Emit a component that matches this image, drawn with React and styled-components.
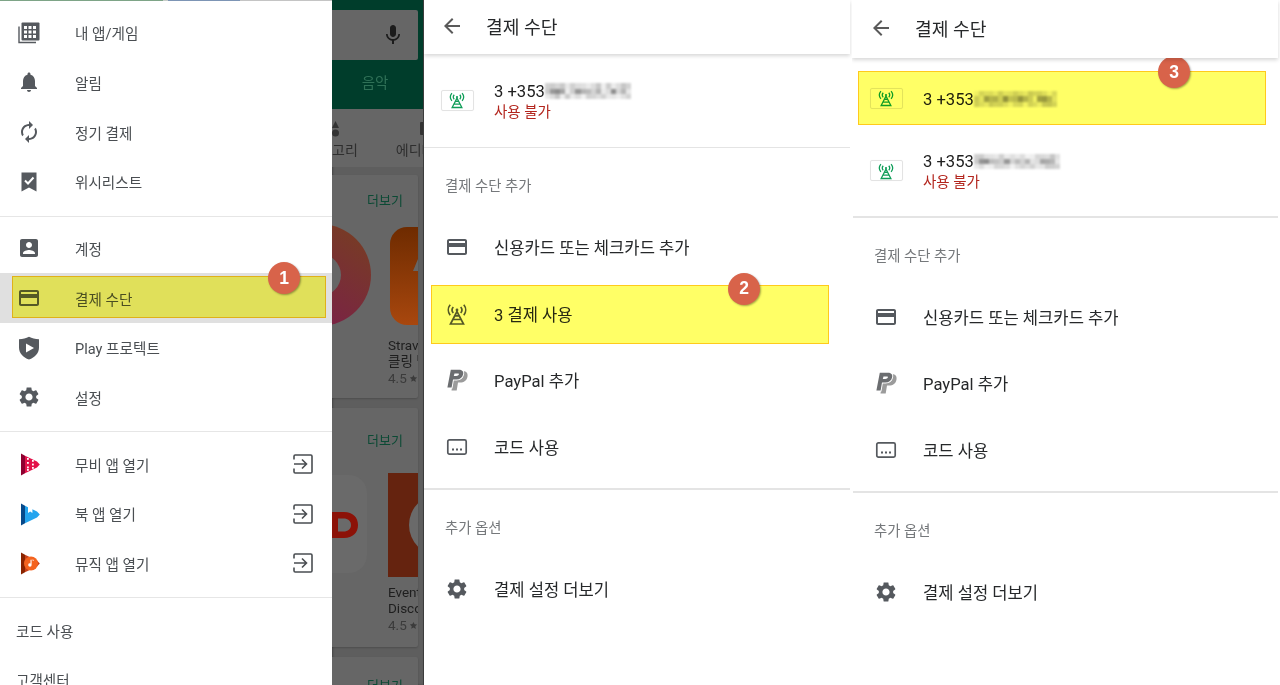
import React from "react";
import styled, { createGlobalStyle } from "styled-components";

const Global = createGlobalStyle`
  html, body { margin: 0; padding: 0; background: #fff; }
  #root { width: 1280px; height: 685px; overflow: hidden; }
  * { box-sizing: border-box; }
`;
const FONT = `Roboto, "Noto Sans CJK KR", "Noto Sans", sans-serif`;

const Page = styled.div`
  display: flex; width: 1280px; height: 685px; overflow: hidden;
  font-family: ${FONT}; background: #fff;
`;
/* ---------- first phone ---------- */
const PhoneOne = styled.section`
  display: flex; width: 424px; height: 685px; flex: none; overflow: hidden;
`;
const Drawer = styled.nav`
  width: 332px; flex: none; background: #fff; position: relative; z-index: 1;
`;
const TopStripe = styled.div`
  height: 1px; margin-bottom: -1px;
  background: linear-gradient(90deg, #7ea487 0 163px, #c8cdc8 163px 168px, #7d95b5 168px 240px, #c4c4c4 240px);
`;
const DrawerGroup = styled.div`
  padding: ${p => p.$pt ?? 8}px 0 ${p => p.$pb ?? 8}px;
  border-bottom: ${p => (p.$last ? "0" : "1.5px solid #e6e6e6")};
`;
const DrawerRow = styled.div`
  position: relative; display: flex; align-items: center; height: 49.67px;
  padding: 0 19px 0 17px; font-size: 14.6px; color: #4a4e52;
  background: ${p => (p.$active ? "#e0e0e0" : "transparent")};
`;
const DrawerIcon = styled.span`
  display: flex; width: 24px; height: 24px; flex: none; margin-right: 34px;
`;
const DrawerLabel = styled.span` flex: 1; white-space: nowrap; `;
const DrawerPlain = styled.div`
  display: flex; align-items: center; height: 49.67px; padding-left: 16px;
  font-size: 14.6px; color: #4a4e52;
`;
/* ---------- dimmed store behind drawer ---------- */
const Dimmed = styled.div`
  width: 92px; flex: none; display: flex; flex-direction: column;
  background: #5e5e5e; border-right: 1px solid #3c3c3c; overflow: hidden;
  box-shadow: inset 1px 0 2px rgba(0,0,0,.25);
`;
const StoreBar = styled.div`
  height: 109px; flex: none; background: #003d2b; padding-top: 10px;
  display: flex; flex-direction: column; align-items: stretch;
`;
const SearchBox = styled.div`
  height: 50px; margin-right: 5px; background: #666; border-radius: 0 2px 2px 0;
  display: flex; align-items: center; justify-content: flex-end; padding-right: 13px;
`;
const StoreTab = styled.div`
  flex: 1; display: flex; align-items: center; justify-content: center; padding: 0 5px 6px 0;
  color: #2f7157; font-size: 14.5px;
`;
const TabRow = styled.div`
  height: 58px; flex: none; background: #666; display: flex; gap: 38px; white-space: nowrap;
  font-size: 14px; color: #2e2e2e; overflow: hidden;
`;
const Tab = styled.div`
  display: flex; flex-direction: column; align-items: flex-start; gap: 2px; padding-top: 11px; flex: none;
`;
const TabGlyph = styled.span` display: flex; height: 17px; padding-left: ${p => p.$pl || 0}px; `;
const Card = styled.div`
  margin: ${p => p.$mt}px 5px 0 0; background: #666; height: ${p => p.$h}px; flex: none;
  border-radius: 0 2px 2px 0; box-shadow: 0 1px 2px rgba(0,0,0,.18); overflow: hidden;
  display: flex; flex-direction: column;
`;
const More = styled.div`
  text-align: right; padding: ${p => p.$pt}px 15px 0 0; font-size: 13px; color: #0c4a35; height: ${p => p.$h}px; flex: none;
`;
const CardBody = styled.div`
  display: grid; grid-template-columns: 56px 30px; 
`;
const AppName = styled.div`
  font-size: 13.5px; line-height: 16px; color: #1e1e1e; white-space: nowrap; overflow: hidden; margin-top: ${p => p.$mt}px;
`;
const AppRating = styled.div`
  display: flex; align-items: center; gap: 2px;
  font-size: 13.5px; line-height: 18px; color: #3b3b3b; white-space: nowrap;
`;
const Art = styled.svg` display: block; flex: none; `;

/* ---------- pay panels ---------- */
const Panel = styled.section`
  width: 428px; flex: none; height: 685px; padding-left: ${p => p.$shift}px; overflow: hidden; background: #fff;
`;
const Header = styled.header`
  position: relative; z-index: 1; height: ${p => p.$h}px; display: flex; align-items: center; background: #fff;
  margin-left: ${p => -p.$shift}px; padding: 0 0 2px ${p => 16 + p.$shift}px; margin-right: 2px;
  box-shadow: 0 2px 4px rgba(0,0,0,.16);
`;
const HeaderIcon = styled.span` display: flex; width: 24px; margin-right: 22px; flex: none; `;
const Title = styled.h1` margin: 0; font-size: 18.2px; font-weight: 400; color: #26282a; `;
const Row = styled.div`
  position: relative; display: flex; align-items: center; height: ${p => p.$h || 66.5}px;
  margin-top: ${p => p.$mt || 0}px; padding-left: 16px;
`;
const Slot = styled.span`
  width: 34px; height: 24px; flex: none; margin-right: 20px; display: flex; align-items: center; justify-content: center;
`;
const RowText = styled.span` font-size: 16.6px; color: #26282a; white-space: nowrap; `;
const Stack = styled.div` display: flex; flex-direction: column; padding-top: ${p => p.$pt || 0}px; `;
const NumberLine = styled.div` display: flex; align-items: center; font-size: 16.6px; line-height: 21px; color: #202020; `;
const Unavailable = styled.div` font-size: 14.5px; line-height: 22px; color: #b3261e; `;
const CardBadge = styled.span`
  display: flex; align-items: center; justify-content: center; width: 33px; height: 21px;
  border: 1px solid #e3e3e3; border-radius: 2px; background: transparent; box-shadow: 0 0 1px rgba(0,0,0,.05);
`;
const Divider = styled.hr`
  margin: 0 2px 0 0; border: 0; height: 1.5px; background: #e4e4e4;
`;
const SectionTitle = styled.div`
  height: 66px; padding: 7px 0 0 21px; display: flex; align-items: center;
  font-size: 14.4px; color: #75787b;
`;
const Section = styled.div` padding-bottom: ${p => p.$pb || 0}px; `;

/* ---------- annotations ---------- */
const Marker = styled.span`
  position: absolute; pointer-events: none;
  top: ${p => p.$t}px; bottom: ${p => p.$b}px; left: ${p => p.$l}px; right: ${p => p.$r}px;
  background: #ffff66; border: 1.5px solid #ffca1c; mix-blend-mode: multiply;
`;
const Badge = styled.span`
  position: absolute; left: ${p => p.$x}px; top: ${p => p.$y}px; width: 32px; height: 32px; border-radius: 50%;
  background: #d8634a; color: #fff; display: flex; align-items: center; justify-content: center;
  font: 700 17.5px "Liberation Sans", Arial, sans-serif; box-shadow: 1px 1px 2px rgba(0,0,0,.35);
`;
const Redact = styled.div`
  display: grid; grid-template-columns: repeat(17, ${p => p.$w}px); grid-auto-rows: 5.3px;
  filter: blur(.8px);
`;
const Cell = styled.span``;

function Pixelated({ seed, w = 5.1 }) {
  const cells = [];
  for (let r = 0; r < 3; r++) {
    for (let c = 0; c < 17; c++) {
      const ch = seed.charCodeAt((c * 3 + r * 7) % seed.length);
      const v = Math.round(242 - (r === 1 ? 1.15 : 0.5) * ((ch * 37 + c * 11) % 90));
      cells.push(<Cell key={`${r}-${c}`} style={{ background: `rgb(${v},${v},${v})` }} />);
    }
  }
  return <Redact $w={w}>{cells}</Redact>;
}

/* ---------- icons ---------- */
const G = "#55595e";
const I = ({ d, size = 24, fill = G }) => (
  <svg width={size} height={size} viewBox="0 0 24 24" fill={fill}><path d={d} /></svg>
);
const bell = "M12 22c1.1 0 2-.9 2-2h-4c0 1.1.9 2 2 2zm6-6v-5c0-3.07-1.63-5.64-4.5-6.32V4c0-.83-.67-1.5-1.5-1.5s-1.5.67-1.5 1.5v.68C7.64 5.36 6 7.92 6 11v5l-2 2v1h16v-1l-2-2z";
const sync = "M12 6v3l4-4-4-4v3c-4.42 0-8 3.58-8 8 0 1.57.46 3.03 1.24 4.26L6.7 14.8c-.45-.83-.7-1.79-.7-2.8 0-3.31 2.69-6 6-6zm6.76 1.74L17.3 9.2c.44.84.7 1.79.7 2.8 0 3.31-2.69 6-6 6v-3l-4 4 4 4v-3c4.42 0 8-3.58 8-8 0-1.57-.46-3.03-1.24-4.26z";
const account = "M3 5v14c0 1.1.89 2 2 2h14c1.1 0 2-.9 2-2V5c0-1.1-.9-2-2-2H5c-1.11 0-2 .9-2 2zm12 4c0 1.66-1.34 3-3 3s-3-1.34-3-3 1.34-3 3-3 3 1.34 3 3zm-9 8c0-2 4-3.1 6-3.1s6 1.1 6 3.1v1H6v-1z";
const card = "M20 4H4c-1.11 0-1.99.89-1.99 2L2 18c0 1.11.89 2 2 2h16c1.11 0 2-.89 2-2V6c0-1.11-.89-2-2-2zm0 14H4v-6h16v6zm0-10H4V6h16v2z";
const gear = "M19.14 12.94c.04-.3.06-.61.06-.94 0-.32-.02-.64-.07-.94l2.03-1.58c.18-.14.23-.41.12-.61l-1.92-3.32c-.12-.22-.37-.29-.59-.22l-2.39.96c-.5-.38-1.03-.7-1.62-.94l-.36-2.54c-.04-.24-.24-.41-.48-.41h-3.84c-.24 0-.43.17-.47.41l-.36 2.54c-.59.24-1.13.57-1.62.94l-2.39-.96c-.22-.08-.47 0-.59.22L2.74 8.87c-.12.21-.08.47.12.61l2.03 1.58c-.05.3-.09.63-.09.94s.02.64.07.94l-2.03 1.58c-.18.14-.23.41-.12.61l1.92 3.32c.12.22.37.29.59.22l2.39-.96c.5.38 1.03.7 1.62.94l.36 2.54c.05.24.24.41.48.41h3.84c.24 0 .44-.17.47-.41l.36-2.54c.59-.24 1.13-.56 1.62-.94l2.39.96c.22.08.47 0 .59-.22l1.92-3.32c.12-.22.07-.47-.12-.61l-2.01-1.58zM12 15.6c-1.98 0-3.6-1.62-3.6-3.6s1.62-3.6 3.6-3.6 3.6 1.62 3.6 3.6-1.62 3.6-3.6 3.6z";
const back = "M20 11H7.83l5.59-5.59L12 4l-8 8 8 8 1.41-1.41L7.83 13H20v-2z";
const mic = "M12 14c1.66 0 3-1.34 3-3V5c0-1.66-1.34-3-3-3S9 3.34 9 5v6c0 1.66 1.34 3 3 3zm5.3-3c0 3-2.54 5.1-5.3 5.1S6.7 14 6.7 11H5c0 3.41 2.72 6.23 6 6.72V21h2v-3.28c3.28-.48 6-3.3 6-6.72h-1.7z";
const star = "M12 2.500l2.900 6.300 6.900.8-5.100 4.700 1.400 6.800L12 17.100l-6.100 3.500 1.400-6.800-5.100-4.700 6.900-.8z";

const AppsIcon = () => (
  <svg width="24" height="24" viewBox="0 0 24 24">
    <path d="M2 5.500v16h17" fill="none" stroke={G} strokeWidth="1.4" />
    <rect x="4.500" y="1.500" width="18" height="18" rx="1" fill={G} />
    <g fill="#fff">
      {[7, 11.5, 16].map(x => [5, 9.5, 14].map(y => <rect key={`${x}-${y}`} x={x} y={y} width="3" height="3" />))}
    </g>
  </svg>
);
const WishIcon = () => (
  <svg width="24" height="24" viewBox="0 0 24 24">
    <path d="M4.500 2.500h15v19l-7.500-4-7.500 4z" fill={G} />
    <path d="M8 10.500l3 3 5.500-6" fill="none" stroke="#fff" strokeWidth="2" />
  </svg>
);
const ShieldIcon = () => (
  <svg width="24" height="24" viewBox="0 0 24 24">
    <path d="M12 .8c3 1.700 6 2.300 10 2.400v8.300c0 5.600-4 10-10 12-6-2-10-6.400-10-12V3.200c4-.1 7-.7 10-2.400z" fill={G} />
    <path d="M9 7.400l8 4.600-8 4.600z" fill="#fff" />
  </svg>
);
const WEDGE = "M4 1.500L8 3.700V21.300L4 23.500z";
const BODY = "M8 3.700L20 9.500L22.800 12.500L20 15.500L8 21.300z";
const MovieApp = () => (
  <svg width="24" height="24" viewBox="0 0 24 24">
    <path d={BODY} fill="#e3124a" />
    <path d={WEDGE} fill="#8e0030" />
    <g fill="#fff">
      {[6, 10, 14.500, 17].map(y => <rect key={y} x="10" y={y} width="1.800" height="1.800" />)}
      {[8, 11.600, 15].map(y => <rect key={y} x="15" y={y} width="1.800" height="1.800" />)}
    </g>
  </svg>
);
const BookApp = () => (
  <svg width="24" height="24" viewBox="0 0 24 24">
    <path d="M8 3.700L11 5.300V11l2.200-1.500L15.400 11V7.200L20 9.500L22.800 12.500L20 15.500L8 21.300z" fill="#24a4ee" />
    <path d={WEDGE} fill="#07498a" />
  </svg>
);
const MusicApp = () => (
  <svg width="24" height="24" viewBox="0 0 24 24">
    <path d={BODY} fill="#c8401a" />
    <path d={WEDGE} fill="#8a2400" />
    <circle cx="14" cy="12.500" r="7" fill="#f4631e" />
    <path d="M14.600 8.700v5.200a1.700 1.700 0 1 1-1.100-1.500V8.700h3.200v1.400z" fill="#fff" />
  </svg>
);
const ExitIcon = () => (
  <svg width="20" height="20" viewBox="0 0 20 20" fill="none" stroke="#4a4e52" strokeWidth="1.6">
    <path d="M1 5.500V2.200C1 1.500 1.500 1 2.200 1h15.600c.7 0 1.200.5 1.200 1.200v15.600c0 .7-.5 1.200-1.200 1.200H2.200c-.7 0-1.200-.5-1.200-1.200v-3.300" />
    <path d="M1 10h12M9 5.500l4.500 4.500L9 14.500" />
  </svg>
);
const Tower = ({ color = G, size = 24 }) => (
  <svg width={size} height={size} viewBox="0 0 24 24" fill="none" stroke={color} strokeWidth="1.700">
    <path d="M12 9.500L5.500 22h13zM8 17.500h8M10 13.800h4" />
    <circle cx="12" cy="8" r="1.400" fill={color} stroke="none" />
    <path d="M8.300 11a4.600 4.600 0 0 1 0-6M15.700 5a4.600 4.600 0 0 1 0 6M5.200 13.200a8.200 8.200 0 0 1 0-10.400M18.800 2.800a8.200 8.200 0 0 1 0 10.400" />
  </svg>
);
const PaypalIcon = () => (
  <svg width="24" height="24" viewBox="0 0 24 24">
    <path fillRule="evenodd" d="M9.500 3h8c3.800 0 5.600 2.200 5 5.500-.7 4-3.500 6-7.500 6h-2l-1.300 8H6.500zM13.300 7l-.8 4h2.300c1.500 0 2.700-.9 3-2.200.2-1.100-.5-1.800-1.800-1.800z" fill="#9b9b9b" />
    <path d="M5 .8h9.200c3.500 0 5.500 2 4.900 5.300-.7 4-3.600 6.400-7.600 6.400H8.800L7.400 20.500H1.200z" fill="#fff" />
    <path fillRule="evenodd" d="M5.800 1.800h8.200c3 0 4.700 1.700 4.200 4.200-.7 3.600-3.200 5.500-6.700 5.500H8L6.600 19.500H2.400zM9.500 5.500L8.800 8h2.400c1.400 0 2.400-.7 2.700-1.700.2-.6-.2-.8-1-.8z" fill="#6b6d70" />
  </svg>
);
const CodeIcon = () => (
  <svg width="24" height="24" viewBox="0 0 24 24">
    <rect x="2.800" y="4.800" width="18.400" height="14.400" rx="1.600" fill="none" stroke={G} strokeWidth="1.700" />
    <g fill={G}><rect x="7" y="13.500" width="2" height="2" /><rect x="11" y="13.500" width="2" height="2" /><rect x="15" y="13.500" width="2" height="2" /></g>
  </svg>
);
const PhoneCard = () => (
  <CardBadge><Tower color="#0f9d58" size={18} /></CardBadge>
);
const Rating = () => (
  <AppRating>4.5<svg width="9" height="9" viewBox="0 0 24 24" fill="#3b3b3b"><path d={star} /></svg></AppRating>
);

/* ---------- content ---------- */
const group1 = [
  [<AppsIcon />, "내 앱/게임"],
  [<I d={bell} />, "알림"],
  [<I d={sync} />, "정기 결제"],
  [<WishIcon />, "위시리스트"],
];
const group3 = [
  [<MovieApp />, "무비 앱 열기"],
  [<BookApp />, "북 앱 열기"],
  [<MusicApp />, "뮤직 앱 열기"],
];

const DrawerItem = ({ icon, label, exit, active, children }) => (
  <DrawerRow $active={active}>
    <DrawerIcon>{icon}</DrawerIcon>
    <DrawerLabel>{label}</DrawerLabel>
    {exit && <ExitIcon />}
    {children}
  </DrawerRow>
);

const PayRow = ({ icon, label, children, h, mt }) => (
  <Row $h={h} $mt={mt}>
    <Slot>{icon}</Slot>
    <RowText>{label}</RowText>
    {children}
  </Row>
);

const PhoneLine = ({ seed, w, h, mt, unavailable, children }) => (
  <Row $h={h} $mt={mt}>
    <Slot><PhoneCard /></Slot>
    <Stack $pt={unavailable ? 4 : 2}>
      <NumberLine>3 +353<Pixelated seed={seed} w={w} /></NumberLine>
      {unavailable && <Unavailable>사용 불가</Unavailable>}
    </Stack>
    {children}
  </Row>
);

function PayPanel({ shift, headerH, top, children }) {
  return (
    <Panel $shift={shift}>
      <Header $h={headerH} $shift={shift}>
        <HeaderIcon><I d={back} fill="#5a5a5a" /></HeaderIcon>
        <Title>결제 수단</Title>
      </Header>
      {top}
      <Divider />
      <Section $pb={8}>
        <SectionTitle>결제 수단 추가</SectionTitle>
        <PayRow icon={<I d={card} />} label="신용카드 또는 체크카드 추가" />
        {children}
        <PayRow icon={<PaypalIcon />} label="PayPal 추가" />
        <PayRow icon={<CodeIcon />} label="코드 사용" />
      </Section>
      <Divider />
      <Section>
        <SectionTitle>추가 옵션</SectionTitle>
        <PayRow icon={<I d={gear} />} label="결제 설정 더보기" />
      </Section>
    </Panel>
  );
}

export default function App() {
  return (
    <Page>
      <Global />
      <PhoneOne>
        <Drawer>
          <TopStripe />
          <DrawerGroup $pb={9}>
            {group1.map(([i, l]) => <DrawerItem key={l} icon={i} label={l} />)}
          </DrawerGroup>
          <DrawerGroup $pt={7} $pb={9}>
            <DrawerItem icon={<I d={account} />} label="계정" />
            <DrawerItem active icon={<I d={card} />} label="결제 수단">
              <Marker $t={3} $b={5} $l={12} $r={6} />
              <Badge $x={268} $y={-11}>1</Badge>
            </DrawerItem>
            <DrawerItem icon={<ShieldIcon />} label="Play 프로텍트" />
            <DrawerItem icon={<I d={gear} />} label="설정" />
          </DrawerGroup>
          <DrawerGroup $pt={7} $pb={9}>
            {group3.map(([i, l]) => <DrawerItem key={l} icon={i} label={l} exit />)}
          </DrawerGroup>
          <DrawerGroup $last $pt={7}>
            <DrawerPlain>코드 사용</DrawerPlain>
            <DrawerPlain>고객센터</DrawerPlain>
          </DrawerGroup>
        </Drawer>
        <Dimmed>
          <StoreBar>
            <SearchBox><I d={mic} fill="#1c1c1c" size={24} /></SearchBox>
            <StoreTab>음악</StoreTab>
          </StoreBar>
          <TabRow>
            <Tab>
              <TabGlyph>
                <Art width="12" height="17" viewBox="0 0 12 17">
                  <path d="M0 8L3.500 1 7 8z" fill="#333" /><circle cx="3.500" cy="13" r="3.500" fill="#333" />
                </Art>
              </TabGlyph>
              고리
            </Tab>
            <Tab>
              <TabGlyph $pl={24}>
                <Art width="8" height="17" viewBox="0 0 8 17">
                  <rect x="0" y="2" width="8" height="13" rx="1" fill="#333" />
                </Art>
              </TabGlyph>
              에디터
            </Tab>
          </TabRow>
          <Card $mt={8} $h={223}>
            <More $pt={15} $h={50}>더보기</More>
            <CardBody>
              <Art width="39" height="102" viewBox="0 0 39 102">
                <defs>
                  <linearGradient id="ring" x1="1" y1="0" x2="0.3" y2="1">
                    <stop offset="0" stopColor="#773f20" /><stop offset="1" stopColor="#7a1f4a" />
                  </linearGradient>
                </defs>
                <circle cx="-12" cy="50" r="51" fill="url(#ring)" />
                <circle cx="-12" cy="50" r="21" fill="#666" />
              </Art>
              <Art width="30" height="102" viewBox="0 0 30 102">
                <defs>
                  <linearGradient id="tile" x1="0.6" y1="0" x2="0.6" y2="1">
                    <stop offset="0" stopColor="#6e2b00" /><stop offset="1" stopColor="#a8470e" />
                  </linearGradient>
                </defs>
                <rect x="2" y="2" width="60" height="98" rx="17" fill="url(#tile)" />
                <path d="M30 34L25 46h5z" fill="#666" />
              </Art>
              <span />
              <Stack>
                <AppName $mt={10}>Strava<br />클링 및</AppName>
                <Rating />
              </Stack>
            </CardBody>
          </Card>
          <Card $mt={10} $h={239}>
            <More $pt={22} $h={63}>더보기</More>
            <CardBody>
              <Art width="39" height="106" viewBox="0 0 39 106">
                <rect x="-60" y="4" width="95" height="98" rx="18" fill="#6a6a6a" />
                <path fillRule="evenodd" d="M0 41h12c9 0 14 5.500 14 13s-5 13-14 13H0zM6 47.500v13h5.500c4.500 0 7.500-2.500 7.500-6.500s-3-6.500-7.500-6.500z" fill="#8c1208" />
              </Art>
              <Art width="30" height="106" viewBox="0 0 30 106">
                <rect x="0" y="2" width="30" height="104" fill="#65230f" />
                <circle cx="52" cy="54" r="31" fill="#6a6a6a" />
              </Art>
              <span />
              <Stack>
                <AppName $mt={7}>Event<br />Disco</AppName>
                <Rating />
              </Stack>
            </CardBody>
          </Card>
          <Card $mt={10} $h={60}>
            <More $pt={18} $h={40}>더보기</More>
          </Card>
        </Dimmed>
      </PhoneOne>

      <PayPanel
        shift={0}
        headerH={54}
        top={<PhoneLine seed="0200614402" h={92.5} unavailable />}
      >
        <PayRow icon={<Tower />} label="3 결제 사용">
          <Marker $t={4.5} $b={3.5} $l={7} $r={23} />
          <Badge $x={304} $y={-8}>2</Badge>
        </PayRow>
      </PayPanel>

      <PayPanel
        shift={1}
        headerH={58}
        top={
          <>
            <PhoneLine seed="8202566471" w={4.9} h={54} mt={13}>
              <Marker $t={0} $b={0} $l={5} $r={14} />
              <Badge $x={305} $y={-15}>3</Badge>
            </PhoneLine>
            <PhoneLine seed="5200611493" h={91} unavailable />
          </>
        }
      />
    </Page>
  );
}
